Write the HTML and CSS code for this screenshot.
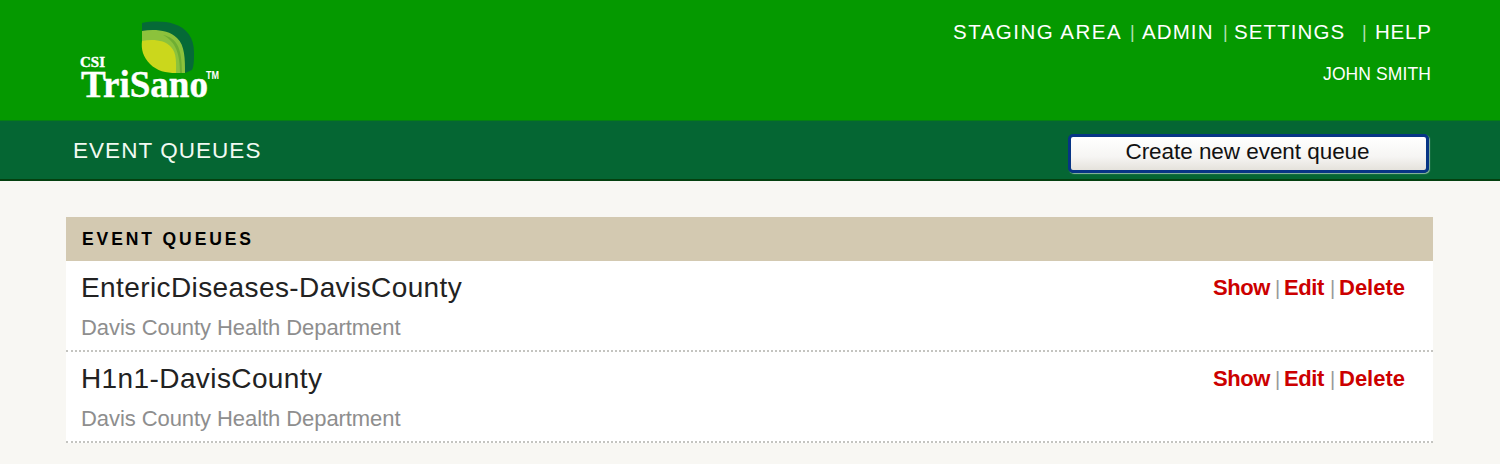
FILE: index.html
```html
<!DOCTYPE html>
<html lang="en">
<head>
<meta charset="utf-8">
<title>TriSano - Event Queues</title>
<link rel="stylesheet" href="styles.css">
</head>
<body>
<header class="masthead">
  <svg class="logo" width="144" height="92" viewBox="78 18 144 92" role="img" aria-label="CSI TriSano">
    <path fill="#056a37" d="M142 23C152 21 165 21 174 24C187 28 194 38 194 52C194 60 194 66 192 70L185 73L174 50L142 32Z"/>
    <path fill="#8cc23c" d="M142 31C154 29 169 30 177 38C185 45 185 60 185 73L174 73L142 41Z"/>
    <path fill="#6fae32" d="M163 35C176 38 182 46 182 73L180 73C180 54 176 42 163 35Z"/>
    <path fill="#cbd71c" d="M142 41C153 39 165 40 171 47C177 53 176 64 176 73C166 73 157 71 150 64C143 57 141 49 142 41Z"/>
    <text class="logo-text" x="80" y="67" font-size="15" textLength="25" lengthAdjust="spacingAndGlyphs">CSI</text>
    <text class="logo-text" x="81" y="97" font-size="37" textLength="127" lengthAdjust="spacingAndGlyphs">TriSano</text>
    <text class="logo-tm" x="206" y="79" font-size="10" textLength="13" lengthAdjust="spacingAndGlyphs">TM</text>
  </svg>
  <div class="account">
    <nav class="nav">
      <a class="staging">STAGING AREA</a><i>|</i><a>ADMIN</a><i>|</i><a>SETTINGS</a><i>|</i><a>HELP</a>
    </nav>
    <div class="user">JOHN SMITH</div>
  </div>
</header>
<div class="titlebar">
  <h1>EVENT QUEUES</h1>
  <button class="create" type="button">Create new event queue</button>
</div>
<main class="panel">
  <h2>EVENT QUEUES</h2>
  <section class="queue">
    <div>
      <div class="name">EntericDiseases-DavisCounty</div>
      <div class="dept">Davis County Health Department</div>
    </div>
    <div class="actions"><a>Show</a><i>|</i><a>Edit</a><i>|</i><a>Delete</a></div>
  </section>
  <section class="queue">
    <div>
      <div class="name">H1n1-DavisCounty</div>
      <div class="dept">Davis County Health Department</div>
    </div>
    <div class="actions"><a>Show</a><i>|</i><a>Edit</a><i>|</i><a>Delete</a></div>
  </section>
</main>
</body>
</html>
```
FILE: styles.css
```css
* { box-sizing: border-box; }
body {
  margin: 0;
  height: 464px;
  overflow: hidden;
  background: #f8f7f3;
  font-family: "Liberation Sans", Arial, sans-serif;
}
h1, h2 { margin: 0; font-weight: normal; }
i { font-style: normal; font-weight: normal; }
.masthead {
  display: flex;
  justify-content: space-between;
  height: 120px;
  padding: 18px 64px 0 78px;
  background: #059900;
  color: #fff;
}
.logo { display: block; overflow: visible; }
.logo-text { fill: #fff; font-family: "Liberation Serif", serif; font-weight: bold; stroke: #fff; stroke-width: .4px; }
.logo-tm { fill: #fff; font-family: "Liberation Sans", sans-serif; font-weight: bold; }
.account { width: 484px; padding-top: 2px; }
.nav {
  display: grid;
  grid-template-columns: 177px 12px 81px 11px 128px 13px 62px;
  padding-left: 1px;
  font-size: 20.5px;
  line-height: 24px;
  letter-spacing: 1.1px;
  white-space: nowrap;
}
.nav .staging { letter-spacing: 1.5px; }
.nav a:last-child { letter-spacing: .8px; }
.nav i { color: #b4e0b2; font-size: 18px; }
.user {
  margin-top: 20px;
  padding-right: 5px;
  font-size: 17.5px;
  line-height: 20px;
  letter-spacing: .1px;
  text-align: right;
}
.titlebar {
  display: flex;
  justify-content: space-between;
  align-items: flex-start;
  height: 61px;
  padding: 14px 71px 0 73px;
  border-top: 1px solid #058013;
  border-bottom: 2px solid #04400f;
  background: #056633;
}
.titlebar h1 { padding-top: 1px; color: #f2faf2; font-size: 22.5px; line-height: 30px; letter-spacing: 1.05px; }
.create {
  width: 361px;
  height: 39px;
  margin-top: -1px;
  padding: 0 2px 3px 0;
  border: 3px solid #073585;
  border-radius: 5px;
  background: linear-gradient(#fff, #f6f5f3 60%, #e5e2dc);
  box-shadow: 1px 1px 1px #8fb8a3;
  color: #111;
  font: 22.5px "Liberation Sans", Arial, sans-serif;
  letter-spacing: -.05px;
}
.panel { width: 1367px; margin: 36px 0 0 66px; background: #fff; }
.panel h2 {
  height: 44px;
  padding-left: 16px;
  background: #d3c9b1;
  color: #000;
  font-size: 17.5px;
  font-weight: bold;
  line-height: 45px;
  letter-spacing: 2.9px;
}
.queue {
  display: flex;
  justify-content: space-between;
  height: 91px;
  padding: 10px 27px 0 15px;
  border-bottom: 2px dotted #c4c4c0;
}
.name { color: #222; font-size: 28px; line-height: 34px; letter-spacing: .4px; }
.dept { margin-top: 10px; color: #8e8e8e; font-size: 22px; line-height: 26px; letter-spacing: -.07px; }
.actions {
  display: grid;
  grid-template-columns: 62px 9px 46px 9px 67px;
  padding-top: 1px;
  color: #c00;
  font-size: 22px;
  font-weight: bold;
  line-height: 32px;
  letter-spacing: -.4px;
  white-space: nowrap;
}
.actions i { color: #999; font-size: 20px; }
.actions a:last-child { letter-spacing: 0; }
```
